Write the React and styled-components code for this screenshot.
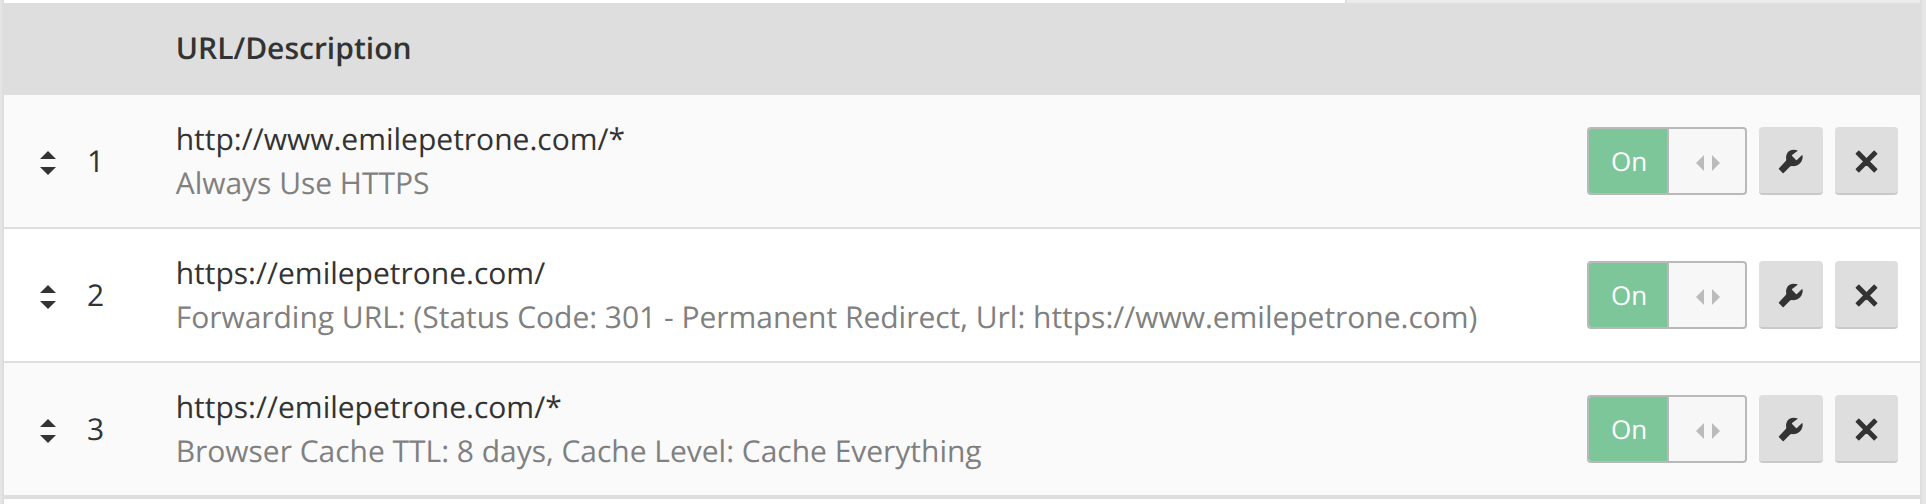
import React from "react";
import styled, { createGlobalStyle } from "styled-components";

const GlobalStyle = createGlobalStyle`
  * { box-sizing: border-box; }
  body {
    margin: 0;
    background: #e5e5e5;
    color: #333;
    font-family: "Open Sans", "Noto Sans", sans-serif;
    font-size: 30px;
    text-rendering: geometricPrecision;
  }
`;

const Panel = styled.main`
  height: 504px;
  margin: 0 4px 0 2px;
  border: solid #dedede;
  border-width: 0 2px;
  background: #fff;
  overflow: hidden;
`;

const CardEdge = styled.div`
  display: flex;
  height: 3px;
`;

const CardBody = styled.div`
  width: 1341px;
  background: #fff;
`;

const CardAside = styled.div`
  flex: 1;
  border-left: 2px solid #dedede;
  background: #ebebeb;
`;

const columns = `
  display: grid;
  grid-template-columns: 171.7px 1fr auto;
  align-items: center;
  padding-right: 22px;
`;

const HeaderRow = styled.header`
  ${columns}
  height: 92px;
  background: #dedede;
`;

const HeaderLabel = styled.div`
  grid-column: 2;
  font-weight: 600;
  line-height: 44px;
  padding-bottom: 2px;
`;

const Row = styled.section`
  ${columns}
  height: 134px;
  border-bottom: 2px solid #dedede;
  background: ${(p) => (p.$striped ? "#fafafa" : "#fff")};
`;

const TableEnd = styled.div`
  height: 2px;
  background: #dedede;
`;

const Order = styled.div`
  display: flex;
  align-items: center;
  gap: 31px;
  padding-left: 36px;
  line-height: 44px;
`;

const SortIcon = styled.svg`
  display: block;
  width: 16px;
  height: 24px;
  margin-top: 4px;
  fill: #333;
`;

const Url = styled.div`
  line-height: 44px;
  white-space: nowrap;
`;

const Description = styled(Url)`
  color: #808080;
  letter-spacing: -0.02px;
`;

const Actions = styled.div`
  display: flex;
  gap: 12px;
`;

const Toggle = styled.div`
  display: flex;
  width: 160px;
  height: 68px;
  border: 2px solid #b9b9b9;
  border-radius: 4px;
  background: #f7f7f7;
  overflow: hidden;
`;

const ToggleLabel = styled.div`
  width: 80px;
  padding-left: 2px;
  border-right: 2px solid #b9b9b9;
  background: #7dc699;
  color: #fff;
  font-size: 26px;
  line-height: 64px;
  text-align: center;
`;

const ToggleHandle = styled.div`
  flex: 1;
  display: flex;
  align-items: center;
  justify-content: center;
  padding: 4px 0 0 2px;
`;

const ArrowsIcon = styled.svg`
  width: 24px;
  height: 16px;
  fill: #bbb;
`;

const IconButton = styled.button`
  display: flex;
  align-items: center;
  justify-content: center;
  width: ${(p) => p.$width}px;
  height: 68px;
  padding: 2px 0 0;
  border: 0;
  border-bottom: 2px solid #c9c9c9;
  border-radius: 4px;
  background: #dedede;
  color: #333;
`;

const ButtonIcon = styled.svg`
  display: block;
  width: 24px;
  height: 24px;
  overflow: visible;
`;

const rules = [
  { url: "http://www.emilepetrone.com/*", description: "Always Use HTTPS" },
  {
    url: "https://emilepetrone.com/",
    description:
      "Forwarding URL: (Status Code: 301 - Permanent Redirect, Url: https://www.emilepetrone.com)",
  },
  {
    url: "https://emilepetrone.com/*",
    description: "Browser Cache TTL: 8 days, Cache Level: Cache Everything",
  },
];

function RuleRow({ index, rule }) {
  return (
    <Row $striped={index % 2 === 0}>
      <Order>
        <SortIcon viewBox="0 0 16 24">
          <path d="M0 8 8 0l8 8zM0 16h16l-8 8z" />
        </SortIcon>
        {index + 1}
      </Order>
      <div>
        <Url>{rule.url}</Url>
        <Description>{rule.description}</Description>
      </div>
      <Actions>
        <Toggle role="switch" aria-checked="true">
          <ToggleLabel>On</ToggleLabel>
          <ToggleHandle>
            <ArrowsIcon viewBox="0 0 24 16">
              <path d="M8 0v16L0 8zM16 0v16l8-8z" />
            </ArrowsIcon>
          </ToggleHandle>
        </Toggle>
        <IconButton $width={64} aria-label="Edit">
          <ButtonIcon viewBox="0 0 24 24" fill="currentColor">
            <path d="M18.3 1.3C14.3-.1 9.6.8 7.8 4.9c-.8 1.9-.9 3.6-.5 5.8-.1.8-.5 1.3-1 1.8L0 19.2c-.3.4-.3.7 0 1l3.7 3.8c.4.3.7.3 1 0l5.9-6.1c.7-.6 1.4-.9 2.3-.8 5.8.6 11.5-3.8 10.7-10.6-.1-.4-.5-.5-.8-.2L17.9 11c-.3.3-.6.3-.9.1l-3.9-4.1c-.3-.3-.3-.6 0-.9L18.4 2c.3-.3.3-.5-.1-.7z" />
          </ButtonIcon>
        </IconButton>
        <IconButton $width={63} aria-label="Delete">
          <ButtonIcon
            viewBox="0 0 24 24"
            fill="currentColor"
            stroke="currentColor"
            strokeWidth="1.4"
            strokeLinejoin="round"
          >
            <path
              transform="translate(11.5 12.5)"
              d="M0-2.55 7.65-10.2 10.2-7.65 2.55 0 10.2 7.65 7.65 10.2 0 2.55-7.65 10.2-10.2 7.65-2.55 0-10.2-7.65-7.65-10.2z"
            />
          </ButtonIcon>
        </IconButton>
      </Actions>
    </Row>
  );
}

export default function App() {
  return (
    <>
      <GlobalStyle />
      <Panel>
        <CardEdge>
          <CardBody />
          <CardAside />
        </CardEdge>
        <HeaderRow>
          <HeaderLabel>URL/Description</HeaderLabel>
        </HeaderRow>
        {rules.map((rule, i) => (
          <RuleRow key={rule.url} index={i} rule={rule} />
        ))}
        <TableEnd />
      </Panel>
    </>
  );
}
